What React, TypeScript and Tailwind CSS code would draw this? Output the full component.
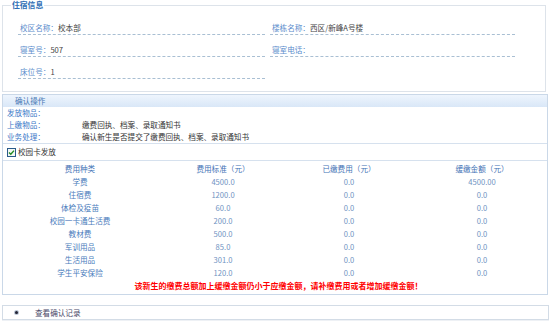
const fees = [
  { name: '学费', std: '4500.0', paid: '0.0', defer: '4500.00' },
  { name: '住宿费', std: '1200.0', paid: '0.0', defer: '0.0' },
  { name: '体检及疫苗', std: '60.0', paid: '0.0', defer: '0.0' },
  { name: '校园一卡通生活费', std: '200.0', paid: '0.0', defer: '0.0' },
  { name: '教材费', std: '500.0', paid: '0.0', defer: '0.0' },
  { name: '军训用品', std: '85.0', paid: '0.0', defer: '0.0' },
  { name: '生活用品', std: '301.0', paid: '0.0', defer: '0.0' },
  { name: '学生平安保险', std: '120.0', paid: '0.0', defer: '0.0' },
]

function Field({ label, value }: { label: string; value?: string }) {
  return (
    <div className="flex h-[22px] items-end border-b border-dashed border-[#a9bfd3] pb-[1px] pl-[2px] leading-[10px]">
      <span className="text-[#5a8ccc]">{label}</span>
      <span className="text-[#444]">{value}</span>
    </div>
  )
}

function InfoRow({ label, value }: { label: string; value?: string }) {
  return (
    <div className="flex h-[12px] items-center leading-[12px]">
      <span className="w-[79px] pl-[4px] text-[#3c78c8]">{label}</span>
      <span className="text-[#333]">{value}</span>
    </div>
  )
}

export default function App() {
  return (
    <div className="h-[336px] w-[553px] bg-white px-[2px] font-['Noto_Sans_CJK_SC','Noto_Sans',sans-serif] text-[7.6px] text-[#333]">
      <fieldset className="w-[544px] border border-[#dde3ea] px-[8px] pb-[12px]">
        <legend className="px-[1px] text-[7.8px] font-bold leading-[10px] text-[#2f6eb5]">住宿信息</legend>
        <div className="grid grid-cols-[247px_245px] gap-x-[5px] pl-[7px] pt-[3px]">
          <Field label="校区名称：" value="校本部" />
          <Field label="楼栋名称：" value="西区/新峰A号楼" />
          <Field label="寝室号：" value="507" />
          <Field label="寝室电话：" />
          <Field label="床位号：" value="1" />
          <div />
        </div>
      </fieldset>

      <div className="mt-[2px] w-[546px] border border-[#cad8e8]">
        <div className="flex h-[12px] items-center bg-gradient-to-b from-[#eef5fd] to-[#d9e7f7] pl-[12px] leading-[12px] text-[#4778b4]">
          确认操作
        </div>
        <div className="border-b border-[#d6e1ee]">
          <InfoRow label="发放物品：" />
          <InfoRow label="上缴物品：" value="缴费回执、档案、录取通知书" />
          <InfoRow label="业务处理：" value="确认新生是否提交了缴费回执、档案、录取通知书" />
        </div>
        <div className="flex h-[17px] items-center gap-[2px] border-b border-[#d6e1ee] pl-[4px] text-[#333]">
          <svg width="9" height="9" viewBox="0 0 9 9">
            <rect x="0.5" y="0.5" width="8" height="8" fill="#f4f8f4" stroke="#2a5a8a" />
            <path d="M2 4.5 L3.8 6.3 L7 2.6" fill="none" stroke="#218a21" strokeWidth="1.4" />
          </svg>
          <span>校园卡发放</span>
        </div>
        <div className="pb-[2px] pl-[11px] pt-[1px]">
          <div className="grid grid-cols-[132px_154px_98px_152px] text-center leading-[13px]">
            <div className="h-[13px] text-[#3f72b5]">费用种类</div>
            <div className="h-[13px] text-[#3f72b5]">费用标准（元）</div>
            <div className="h-[13px] text-[#3f72b5]">已缴费用（元）</div>
            <div className="h-[13px] pl-[16px] text-[#3f72b5]">缓缴金额（元）</div>
            {fees.map((f) => (
              <div key={f.name} className="contents">
                <div className="h-[13px] text-[#4a7cbc]">{f.name}</div>
                <div className="h-[13px] text-[#6f93c2]">{f.std}</div>
                <div className="h-[13px] text-[#6f93c2]">{f.paid}</div>
                <div className="h-[13px] pl-[16px] text-[#6f93c2]">{f.defer}</div>
              </div>
            ))}
          </div>
          <div className="flex h-[13px] items-center justify-center pr-[4px] text-[8px] font-bold leading-[13px] text-[#ff0000]">
            该新生的缴费总额加上缓缴金额仍小于应缴金额，请补缴费用或者增加缓缴金额！
          </div>
        </div>
      </div>

      <div className="mt-[10px] flex h-[15px] w-[547px] items-center border border-[#d3dce6] shadow-[0_1px_0_#eef1f5]">
        <span className="ml-[11px] flex h-[5px] w-[5px] items-center justify-center rounded-full bg-[#b8c4d4]">
          <span className="h-[3px] w-[3px] rounded-full bg-[#223]" />
        </span>
        <span className="ml-[16px] text-[#4a4a6a]">查看确认记录</span>
      </div>
    </div>
  )
}
